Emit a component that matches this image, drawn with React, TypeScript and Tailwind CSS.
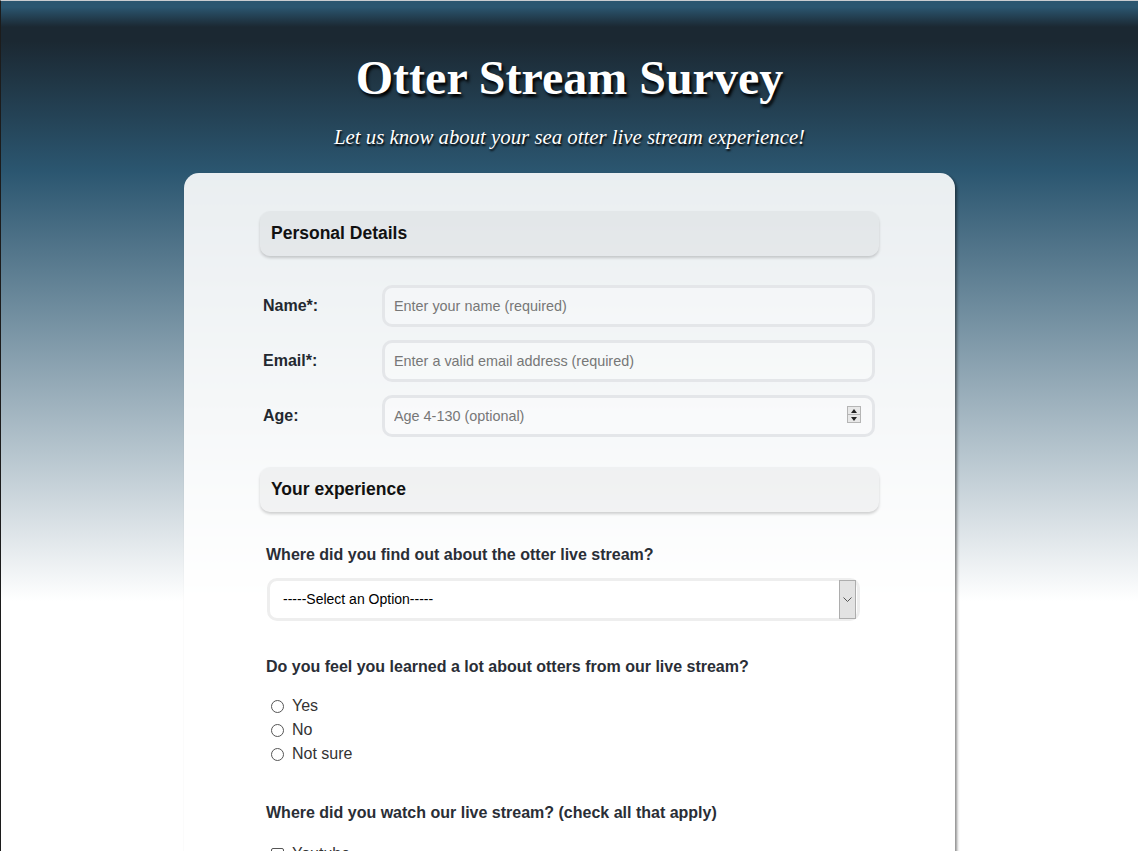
import React from 'react';

const SectionHeader = ({ title }: { title: string }) => (
  <div className="flex h-[45px] items-center rounded-[10px] bg-black/[0.035] px-[11px] text-[17.5px] font-bold text-[#111] shadow-[0_2px_3px_rgba(0,0,0,0.18)]">
    {title}
  </div>
);

const TextRow = ({ label, required, placeholder, spinner }: { label: string; required?: boolean; placeholder: string; spinner?: boolean }) => (
  <div className="flex items-center">
    <label className="w-[122px] pl-[3px] text-[16px] font-bold text-[#23282f]">
      {label}
      {required && '*'}:
    </label>
    <div className="relative w-[493px]">
      <input
        type="text"
        placeholder={placeholder}
        className="h-[42px] w-full rounded-[10px] border-[3px] border-[#e4e6e9] bg-white/30 px-[9px] text-[14.4px] text-[#333] outline-none placeholder:text-[#777]"
      />
      {spinner && (
        <div className="absolute right-[14px] top-[11px] flex h-[17px] w-[14px] flex-col border border-[#b5b5b5] bg-[#e8e8e8]">
          <div className="flex flex-1 items-center justify-center border-b border-[#b5b5b5]">
            <div className="h-0 w-0 border-x-[3.5px] border-b-[4px] border-x-transparent border-b-[#222]" />
          </div>
          <div className="flex flex-1 items-center justify-center">
            <div className="h-0 w-0 border-x-[3.5px] border-t-[4px] border-x-transparent border-t-[#222]" />
          </div>
        </div>
      )}
    </div>
  </div>
);

const Question = ({ children }: { children: React.ReactNode }) => (
  <p className="pl-[6px] text-[16px] font-bold leading-[18px] text-[#2a2e36]">{children}</p>
);

export default function App() {
  const radios = ['Yes', 'No', 'Not sure'];
  const checks = ['Youtube', 'Website', 'Facebook'];

  return (
    <div
      className="min-h-screen border-l border-t border-l-[#1c1c1c] border-t-[#c9ccd0] bg-[linear-gradient(to_bottom,#2b5670_0px,#2b5670_6px,#1b2832_26px,#1b2832_40px,#2b5670_170px,#ffffff_600px)] font-['Liberation_Sans',Arial,sans-serif]"
    >
      <header className="pt-[48px] text-center text-white">
        <h1 className="font-['Liberation_Serif','Times_New_Roman',serif] text-[48px] font-bold leading-[58px] [text-shadow:2px_3px_3px_#000]">
          Otter Stream Survey
        </h1>
        <p className="mt-[17px] font-['Liberation_Serif','Times_New_Roman',serif] text-[20.8px] italic leading-[26px] [text-shadow:1px_2px_2px_#000]">
          Let us know about your sea otter live stream experience!
        </p>
      </header>

      <main className="mx-auto mt-[23px] w-[771px] rounded-t-[15px] bg-white/90 px-[76px] pb-10 pt-[38px] shadow-[2px_2px_3px_rgba(0,0,0,0.45)]">
        <SectionHeader title="Personal Details" />
        <div className="mt-[29px] flex flex-col gap-[13px]">
          <TextRow label="Name" required placeholder="Enter your name (required)" />
          <TextRow label="Email" required placeholder="Enter a valid email address (required)" />
          <TextRow label="Age" placeholder="Age 4-130 (optional)" spinner />
        </div>

        <div className="mt-[30px]">
          <SectionHeader title="Your experience" />
        </div>

        <div className="mt-[34px]">
          <Question>Where did you find out about the otter live stream?</Question>
          <div className="ml-[7px] mt-[14px] flex h-[43px] w-[593px] items-stretch rounded-[10px] border-[3px] border-[#eeeeee] bg-white">
            <div className="flex flex-1 items-center pl-[13px] text-[14px] text-black">-----Select an Option-----</div>
            <div className="my-[-1px] mr-[1px] flex w-[17px] items-center justify-center border border-[#adadad] bg-[#e3e3e3]">
              <svg width="9" height="6" viewBox="0 0 9 6" fill="none" stroke="#555" strokeWidth="1">
                <path d="M0.5 0.5 L4.5 4.5 L8.5 0.5" />
              </svg>
            </div>
          </div>
        </div>

        <div className="mt-[37px]">
          <Question>Do you feel you learned a lot about otters from our live stream?</Question>
          <div className="mt-[18px] flex flex-col pl-[11px]">
            {radios.map((r) => (
              <label key={r} className="flex h-[24px] items-center gap-[8px] text-[16px] text-[#333]">
                <span className="h-[13px] w-[13px] rounded-full border border-[#555] bg-white" />
                {r}
              </label>
            ))}
          </div>
        </div>

        <div className="mt-[38px]">
          <Question>Where did you watch our live stream? (check all that apply)</Question>
          <div className="mt-[20px] flex flex-col pl-[11px]">
            {checks.map((c) => (
              <label key={c} className="flex h-[24px] items-center gap-[8px] text-[16px] text-[#333]">
                <span className="h-[13px] w-[13px] rounded-[2px] border border-[#555] bg-white" />
                {c}
              </label>
            ))}
          </div>
        </div>
      </main>
    </div>
  );
}
